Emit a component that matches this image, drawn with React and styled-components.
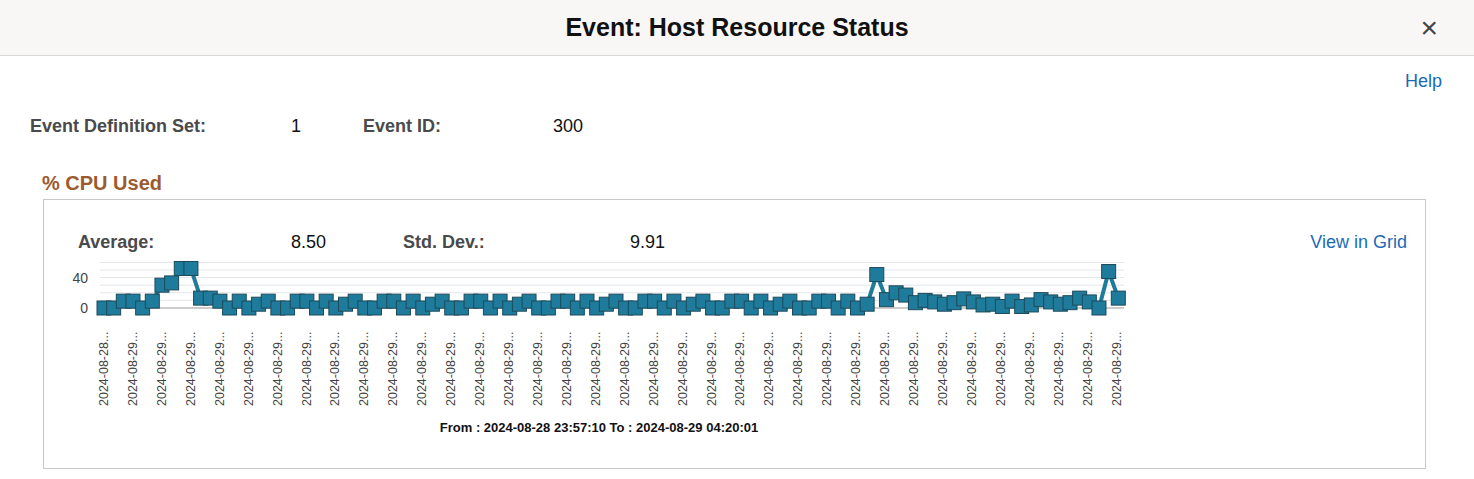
import React from "react";
import styled, { createGlobalStyle } from "styled-components";

const GlobalStyle = createGlobalStyle`
  body { margin: 0; font-family: "Liberation Sans", Arial, sans-serif; background: #fff; }
`;

const spikes = {
  2: 9, 3: 9, 6: 30, 7: 33, 8: 52, 9: 52, 10: 13, 11: 13, 80: 44, 81: 11, 82: 20, 83: 17,
  84: 7, 85: 10, 86: 8, 87: 5, 88: 7, 89: 12, 90: 8, 91: 4, 92: 5, 93: 2, 94: 9, 95: 2,
  96: 4, 97: 11, 98: 8, 99: 5, 100: 7, 101: 13, 102: 8, 103: 0, 104: 48, 105: 13,
};
const vals = Array.from({ length: 106 }, (_, i) =>
  spikes[i] !== undefined ? spikes[i] : [0, 0, 9, 9, 0, 9, 0, 5, 9][i % 9]
);

const Page = styled.div`
  width: 1474px;
  height: 479px;
  overflow: hidden;
`;

const Header = styled.div`
  height: 55px;
  background: #f8f7f6;
  border-bottom: 1px solid #d8d8d8;
  display: flex;
  align-items: center;
  justify-content: center;
  position: relative;
`;

const Title = styled.h1`
  margin: 0;
  font-size: 25px;
  font-weight: bold;
  color: #111;
`;

const Close = styled.span`
  position: absolute;
  right: 36px;
  top: 11px;
  font-size: 30px;
  color: #444;
  font-weight: 300;
`;

const Body = styled.div`
  padding: 15px 32px 0 30px;
`;

const HelpRow = styled.div`
  display: flex;
  justify-content: flex-end;
`;

const Link = styled.span`
  color: #1b6ab7;
  font-size: 18px;
`;

const Fields = styled.div`
  display: flex;
  align-items: center;
  margin-top: ${(p) => (p.$top === undefined ? 22 : p.$top)}px;
  height: 24px;
`;

const Label = styled.span`
  font-weight: bold;
  font-size: 18px;
  color: #4a4a4a;
  width: ${(p) => p.$w}px;
`;

const Value = styled.span`
  font-size: 18px;
  color: #111;
  width: ${(p) => p.$w}px;
`;

const Section = styled.h2`
  margin: 34px 0 0 12px;
  font-size: 20px;
  font-weight: bold;
  color: #9c5b2f;
`;

const Box = styled.div`
  margin: 4px 16px 0 13px;
  border: 1px solid #c8c8c8;
  height: 270px;
  padding: 30px 18px 0 34px;
  box-sizing: border-box;
`;

const TopRow = styled.div`
  display: flex;
  justify-content: space-between;
  align-items: center;
`;

const ChartWrap = styled.div`
  margin: 6px 0 0 -34px;
`;

const Range = styled.div`
  text-align: center;
  width: 1110px;
  margin-left: -34px;
  font-size: 13px;
  font-weight: bold;
  color: #111;
  margin-top: 0;
`;

function Chart() {
  const x0 = 60, step = 9.66, y0 = 48, k = 0.76;
  const pts = vals.map((v, i) => [x0 + i * step, y0 - v * k]);
  const labels = [];
  for (let i = 0; i < 36; i++) labels.push(x0 + i * 28.93);
  return (
    <svg width="1100" height="160" style={{ display: "block" }}>
      {[10, 20, 30, 40, 50, 60].map((g) => (
        <line key={g} x1="56" x2="1080" y1={y0 - g * k} y2={y0 - g * k} stroke="#e3e6ea" />
      ))}
      <line x1="56" x2="1080" y1={y0} y2={y0} stroke="#999" />
      <text x="44" y={y0 - 40 * k + 5} fontSize="14" fill="#444" textAnchor="end">40</text>
      <text x="44" y={y0 + 5} fontSize="14" fill="#444" textAnchor="end">0</text>
      <polyline points={pts.map((p) => p.join(",")).join(" ")} fill="none" stroke="#1f7b9c" strokeWidth="4" />
      {pts.map(([x, y], i) => (
        <rect key={i} x={x - 7} y={y - 7} width="14" height="14" fill="#1f7b9c" stroke="#1d4a5a" strokeWidth="1" />
      ))}
      {labels.map((x, i) => (
        <text key={i} transform={`translate(${x + 4},${146}) rotate(-90)`} fontSize="12.5" fill="#444">
          {i === 0 ? "2024-08-28..." : "2024-08-29..."}
        </text>
      ))}
    </svg>
  );
}

export default function App() {
  return (
    <Page>
      <GlobalStyle />
      <Header>
        <Title>Event: Host Resource Status</Title>
        <Close>×</Close>
      </Header>
      <Body>
        <HelpRow><Link>Help</Link></HelpRow>
        <Fields>
          <Label $w={261}>Event Definition Set:</Label>
          <Value $w={72}>1</Value>
          <Label $w={190}>Event ID:</Label>
          <Value $w={60}>300</Value>
        </Fields>
        <Section>% CPU Used</Section>
        <Box>
          <TopRow>
            <Fields $top={0}>
              <Label $w={213}>Average:</Label>
              <Value $w={112}>8.50</Value>
              <Label $w={227}>Std. Dev.:</Label>
              <Value $w={60}>9.91</Value>
            </Fields>
            <Link>View in Grid</Link>
          </TopRow>
          <ChartWrap>
            <Chart />
          </ChartWrap>
          <Range>From : 2024-08-28 23:57:10 To : 2024-08-29 04:20:01</Range>
        </Box>
      </Body>
    </Page>
  );
}
